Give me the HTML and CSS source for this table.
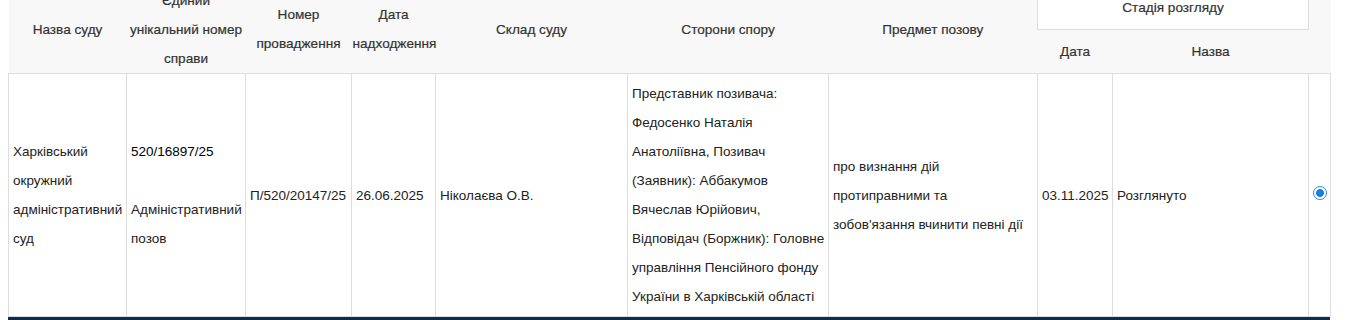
FILE: index.html
```html
<!DOCTYPE html>
<html lang="uk">
<head>
<meta charset="utf-8">
<title>Справи</title>
<link rel="stylesheet" href="styles.css">
</head>
<body>
<div class="page">
  <table class="cases">
    <colgroup>
      <col class="c-court">
      <col class="c-number">
      <col class="c-proc">
      <col class="c-date">
      <col class="c-judges">
      <col class="c-parties">
      <col class="c-subject">
      <col class="c-sdate">
      <col class="c-sname">
      <col class="c-radio">
    </colgroup>
    <thead>
      <tr class="head-top">
        <th rowspan="2">Назва суду</th>
        <th rowspan="2">Єдиний унікальний номер справи</th>
        <th rowspan="2">Номер провадження</th>
        <th rowspan="2">Дата надходження</th>
        <th rowspan="2">Склад суду</th>
        <th rowspan="2">Сторони спору</th>
        <th rowspan="2">Предмет позову</th>
        <th colspan="2" class="stage">Стадія розгляду</th>
        <th rowspan="2"></th>
      </tr>
      <tr class="head-sub">
        <th>Дата</th>
        <th>Назва</th>
      </tr>
    </thead>
    <tbody>
      <tr>
        <td>Харківський окружний адміністративний суд</td>
        <td><span class="case-no">520/16897/25</span><br><br>Адміністративний позов</td>
        <td>П/520/20147/25</td>
        <td>26.06.2025</td>
        <td>Ніколаєва О.В.</td>
        <td>Представник позивача: Федосенко Наталія Анатоліївна, Позивач (Заявник): Аббакумов Вячеслав Юрійович, Відповідач (Боржник): Головне управління Пенсійного фонду України в Харківській області</td>
        <td class="subject">про визнання дій протиправними та зобов'язання вчинити певні дії</td>
        <td>03.11.2025</td>
        <td>Розглянуто</td>
        <td class="pick"><input type="radio" name="case" checked aria-label="Обрати справу"></td>
      </tr>
    </tbody>
  </table>
  <div class="footer-bar"></div>
</div>
</body>
</html>
```
FILE: styles.css
```css
html, body {
  margin: 0;
  padding: 0;
  background: #fff;
}

.page {
  padding: 0 15px 0 8px;
  margin-top: -15px;
  font-family: "Liberation Sans", Arial, Helvetica, sans-serif;
  font-size: 13.5px;
  color: #333;
}

.cases {
  width: 1323px;
  table-layout: fixed;
  border-collapse: collapse;
  border-spacing: 0;
}

.c-court   { width: 118px; }
.c-number  { width: 119px; }
.c-proc    { width: 106px; }
.c-date    { width: 84px; }
.c-judges  { width: 192px; }
.c-parties { width: 201px; }
.c-subject { width: 209px; }
.c-sdate   { width: 75px; }
.c-sname   { width: 196px; }
.c-radio   { width: 22px; }

.cases th {
  background: #f8f8f8;
  font-weight: normal;
  font-size: 13.6px;
  color: #333;
  text-align: center;
  vertical-align: middle;
  line-height: 29px;
  padding: 0 1px;
  border-bottom: 1px solid #ddd;
  -webkit-text-stroke: 0.2px #333;
}

.cases .head-top .stage {
  background: #fff;
  border: 1px solid #ddd;
  padding: 0 4px;
}

.cases .head-top th,
.cases .head-sub th {
  height: 43px;
}

.cases td {
  border: 1px solid #ddd;
  vertical-align: middle;
  line-height: 29px;
  padding: 5px 3px 5px 4px;
  color: #222;
  text-align: left;
}

.cases td.subject {
  padding-right: 8px;
}

.case-no {
  color: #000;
}

.cases td.pick {
  text-align: center;
  padding: 0;
}

.pick input {
  appearance: none;
  -webkit-appearance: none;
  box-sizing: border-box;
  display: inline-block;
  margin: 0 0 6px 0;
  width: 14px;
  height: 14px;
  border: 1.5px solid #2b86e6;
  border-radius: 50%;
  background: radial-gradient(circle, #1a7de2 0 3.6px, #fff 4.3px);
  vertical-align: middle;
}

.footer-bar {
  width: 1322px;
  height: 20px;
  background: #0f2b4d;
}
```
